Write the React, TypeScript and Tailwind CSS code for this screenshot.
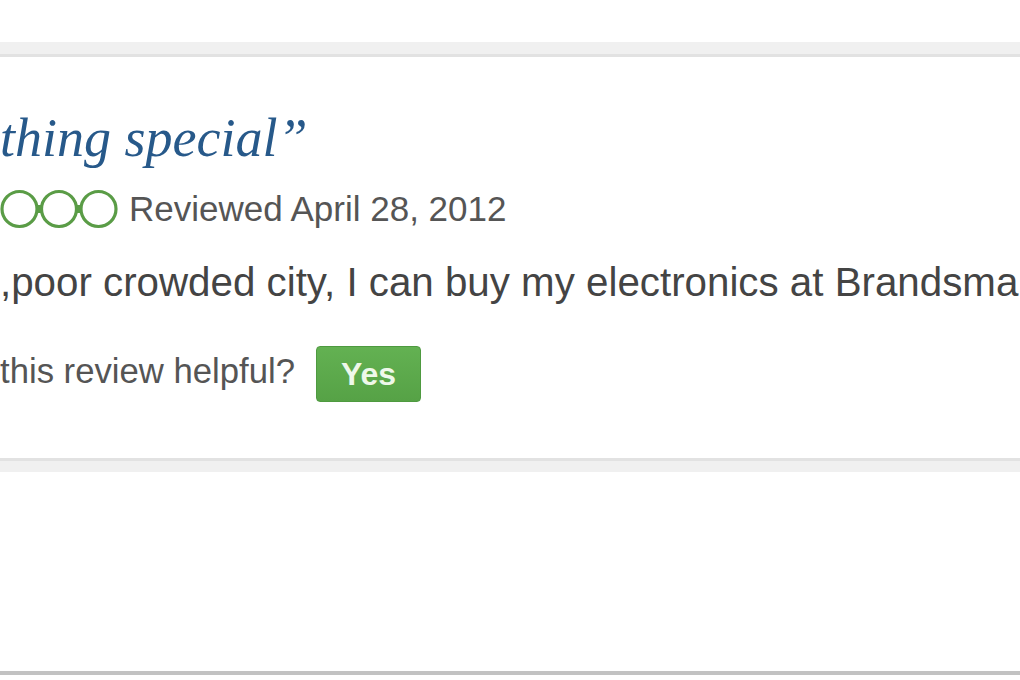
import React from 'react';

function Bubbles() {
  return (
    <svg width="120" height="40" viewBox="0 0 120 40" className="shrink-0">
      <circle cx="19.5" cy="20" r="17.5" fill="none" stroke="#5a9c46" strokeWidth="3.2" />
      <circle cx="59" cy="20" r="17.5" fill="none" stroke="#5a9c46" strokeWidth="3.2" />
      <circle cx="98.5" cy="20" r="17.5" fill="none" stroke="#5a9c46" strokeWidth="3.2" />
      <rect x="36.5" y="16" width="6" height="8" fill="#5a9c46" />
      <rect x="76" y="16" width="6" height="8" fill="#5a9c46" />
    </svg>
  );
}

export default function App() {
  return (
    <div className="w-[1020px] h-[680px] bg-white overflow-hidden flex flex-col font-['Liberation_Sans',Arial,sans-serif]">
      <div className="h-[42px] shrink-0" />
      <div className="h-[15px] shrink-0 bg-[#f0f0f0] border-b-[3px] border-[#e2e2e2]" />

      <div className="flex flex-col pt-[54px] overflow-hidden">
        <h2 className="text-[54px] leading-[54px] italic text-[#27598a] whitespace-nowrap font-['Liberation_Serif',Georgia,serif]">
          thing special”
        </h2>

        <div className="flex items-center h-[40px] mt-[24px]">
          <Bubbles />
          <span className="ml-[9px] text-[35px] leading-[40px] text-[#555555] whitespace-nowrap">
            Reviewed April 28, 2012
          </span>
        </div>

        <p className="mt-[31px] text-[40.3px] leading-[46px] text-[#444444] whitespace-nowrap">
          ,poor crowded city, I can buy my electronics at Brandsma
        </p>

        <div className="flex items-center h-[56px] mt-[40px]">
          <span className="text-[34.7px] leading-[40px] text-[#555555] whitespace-nowrap mb-[7px]">
            this review helpful?
          </span>
          <button className="ml-[21px] w-[105px] h-[56px] rounded-[4px] border border-[#4e9a40] bg-gradient-to-b from-[#63b152] to-[#56a246] text-[#eef8ea] text-[32px] font-bold leading-none flex items-center justify-center">
            Yes
          </button>
        </div>
      </div>

      <div className="h-[14px] shrink-0 mt-[56px] bg-[#f0f0f0] border-t-[3px] border-[#e2e2e2]" />
      <div className="flex-1" />
      <div className="h-[4px] shrink-0 bg-[#c2c2c2]" />
      <div className="h-[5px] shrink-0" />
    </div>
  );
}
